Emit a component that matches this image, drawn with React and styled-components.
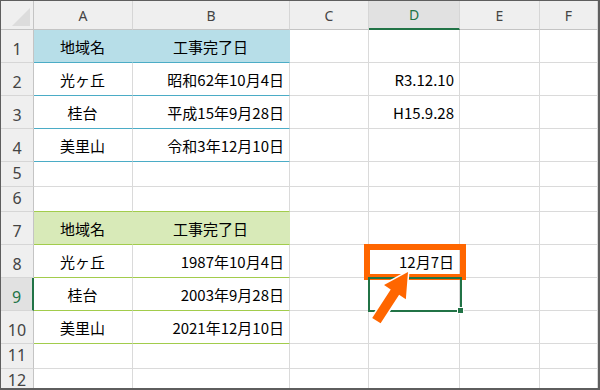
import React from 'react'
import styled, { createGlobalStyle } from 'styled-components';

const GlobalStyle = createGlobalStyle`
    body {
        margin: 0;
        background: #ffffff;
    }
`;

const GRID = '#dadada';
const HEAD_BG = '#efefef';
const SEL_BG = '#e1e1e1';
const GREEN = '#217346';

const Frame = styled.div`
    position: relative;
    width: 600px;
    height: 390px;
    box-sizing: border-box;
    border-style: solid;
    border-color: #5e5e5e;
    border-width: 1px 2px 2px 1px;
    overflow: hidden;
    background: #ffffff;
`;

const Sheet = styled.div`
    display: grid;
    grid-template-columns: 33px 99px 157px 79px 91px 80px 1fr;
    grid-template-rows: 29px 33px 33px 33px 33px 25px 25px 33px 33px 33px 33px 25px 25px;
    font-family: "Noto Sans CJK JP", "Noto Sans", sans-serif;
`;

const Corner = styled.div`
    display: flex;
    align-items: flex-end;
    justify-content: flex-end;
    padding: 0 3px 3px 0;
    background: ${HEAD_BG};
    border-right: 1px solid #c4c4c4;
    border-bottom: 1px solid #c4c4c4;
`;

const ColHead = styled.div`
    display: flex;
    align-items: center;
    justify-content: center;
    background: ${p => (p.$selected ? SEL_BG : HEAD_BG)};
    color: ${p => (p.$selected ? GREEN : '#444444')};
    border-right: 1px solid #d6d6d6;
    border-bottom: ${p => (p.$selected ? `2px solid ${GREEN}` : '1px solid #c4c4c4')};
    font-family: "Noto Sans", sans-serif;
    font-size: 14px;
`;

const RowHead = styled.div`
    display: flex;
    align-items: flex-end;
    justify-content: center;
    padding-bottom: 3px;
    line-height: 20px;
    background: ${p => (p.$selected ? SEL_BG : HEAD_BG)};
    color: ${p => (p.$selected ? GREEN : '#444444')};
    border-right: ${p => (p.$selected ? `2px solid ${GREEN}` : '1px solid #c4c4c4')};
    border-bottom: 1px solid #d6d6d6;
    font-family: "Noto Sans", sans-serif;
    font-size: 16px;
`;

const Cell = styled.div`
    display: flex;
    align-items: center;
    justify-content: ${p => (p.$align === 'right' ? 'flex-end' : p.$align === 'center' ? 'center' : 'flex-start')};
    padding: 0 5px 0 4px;
    background: ${p => p.$fill || '#ffffff'};
    border-right: 1px solid ${p => p.$fill || GRID};
    border-bottom: 1px solid ${p => p.$line || GRID};
    color: #000000;
    font-size: 15px;
    white-space: nowrap;
`;

const Highlight = styled.div`
    position: absolute;
    left: 363px;
    top: 243px;
    width: 102px;
    height: 36px;
    box-sizing: border-box;
    border: 6px solid #ff6600;
    pointer-events: none;
`;

const Selection = styled.div`
    position: absolute;
    left: 367px;
    top: 276px;
    width: 94px;
    height: 35px;
    box-sizing: border-box;
    border: 2px solid ${GREEN};
    pointer-events: none;
`;

const FillHandle = styled.div`
    position: absolute;
    left: 456px;
    top: 306px;
    width: 7px;
    height: 7px;
    box-sizing: border-box;
    background: ${GREEN};
    border: 1px solid #ffffff;
`;

const Overlay = styled.svg`
    position: absolute;
    left: -1px;
    top: -1px;
    width: 600px;
    height: 390px;
    pointer-events: none;
`;

const BLUE = { fill: '#b7dee8', line: '#4bacc6' };
const LIME = { fill: '#d8eab8', line: '#a2cc4c' };

const columns = ['A', 'B', 'C', 'D', 'E', 'F'];

const rows = [
    { n: 1, a: '地域名', b: '工事完了日', head: BLUE },
    { n: 2, a: '光ヶ丘', b: '昭和62年10月4日', d: 'R3.12.10', body: BLUE },
    { n: 3, a: '桂台', b: '平成15年9月28日', d: 'H15.9.28', body: BLUE },
    { n: 4, a: '美里山', b: '令和3年12月10日', body: BLUE },
    { n: 5 },
    { n: 6, edge: LIME },
    { n: 7, a: '地域名', b: '工事完了日', head: LIME },
    { n: 8, a: '光ヶ丘', b: '1987年10月4日', d: '12月7日', body: LIME },
    { n: 9, a: '桂台', b: '2003年9月28日', body: LIME, selected: true },
    { n: 10, a: '美里山', b: '2021年12月10日', body: LIME },
    { n: 11 },
    { n: 12 },
];

export default class App extends React.Component {

    renderRow = (row) => {
        const style = row.head || row.body || row.edge;
        const fill = row.head ? row.head.fill : undefined;
        const line = style ? style.line : undefined;
        return <React.Fragment key={row.n}>
            <RowHead $selected={row.selected}>{row.n}</RowHead>
            <Cell $align="center" $fill={fill} $line={line}>{row.a}</Cell>
            <Cell $align={row.head ? 'center' : 'right'} $fill={fill} $line={line}>{row.b}</Cell>
            <Cell />
            <Cell $align="right">{row.d}</Cell>
            <Cell />
            <Cell />
        </React.Fragment>
    };

    render() {
        return (
            <Frame>
                <GlobalStyle />
                <Sheet>
                    <Corner>
                        <svg width="18" height="18" viewBox="0 0 18 18">
                            <polygon points="18,0 18,18 0,18" fill="#dcdcdc" />
                        </svg>
                    </Corner>
                    {columns.map(c => <ColHead key={c} $selected={c === 'D'}>{c}</ColHead>)}
                    {rows.map(this.renderRow)}
                </Sheet>
                <Highlight />
                <Selection />
                <FillHandle />
                <Overlay viewBox="0 0 600 390">
                    <polygon
                        points="0,0 13,24 5,24 5,58 -5,58 -5,24 -13,24"
                        transform="translate(408,272) rotate(33)"
                        fill="#ff6600"
                        stroke="#ffffff"
                        strokeWidth="3"
                        strokeLinejoin="miter"
                        paintOrder="stroke"
                    />
                </Overlay>
            </Frame>
        );
    }

}
